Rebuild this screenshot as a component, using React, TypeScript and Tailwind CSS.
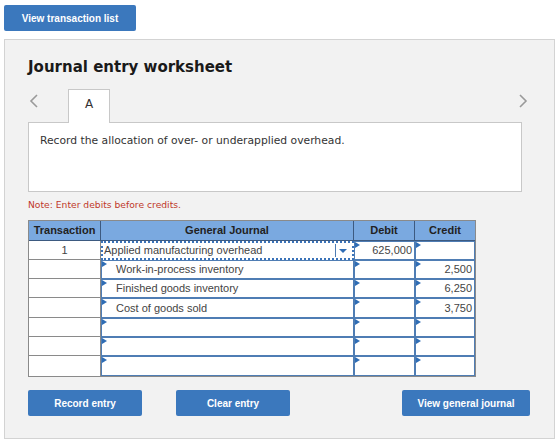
import React from 'react';

const rows = [
  { t: '1', acct: 'Applied manufacturing overhead', debit: '625,000', credit: '', focus: true },
  { t: '', acct: 'Work-in-process inventory', debit: '', credit: '2,500' },
  { t: '', acct: 'Finished goods inventory', debit: '', credit: '6,250' },
  { t: '', acct: 'Cost of goods sold', debit: '', credit: '3,750' },
  { t: '', acct: '', debit: '', credit: '' },
  { t: '', acct: '', debit: '', credit: '' },
  { t: '', acct: '', debit: '', credit: '' },
];

function Marker() {
  return (
    <span className="absolute left-0 top-0 w-0 h-0 border-t-[3px] border-b-[3px] border-l-[5px] border-t-transparent border-b-transparent border-l-[#2f6db5]" />
  );
}

function InputCell({ children, className }: { children?: React.ReactNode; className?: string }) {
  return (
    <div className={`relative bg-white border border-[#4f7db4] flex items-center ${className ?? ''}`}>
      <Marker />
      {children}
    </div>
  );
}

function BlueButton({ label, className }: { label: string; className: string }) {
  return (
    <button
      className={`block h-[26px] bg-[#3b78bd] rounded-[2px] text-white text-[10px] font-bold ${className}`}
      style={{ fontFamily: '"Liberation Sans", Arial, sans-serif' }}
    >
      {label}
    </button>
  );
}

export default function App() {
  return (
    <div className="w-[560px] h-[445px] bg-white pt-[5px] pl-[4px]" style={{ fontFamily: '"Liberation Sans", Arial, sans-serif' }}>
      <BlueButton label="View transaction list" className="w-[132px]" />

      <div className="mt-[8px] w-[551px] h-[400px] bg-[#f2f2f2] border border-[#d3d3d3] pl-[23px] pt-[17px]">
        <h1 className="text-[15px] font-bold text-[#1a1a1a] leading-[20px]" style={{ fontFamily: '"DejaVu Sans", Verdana, sans-serif' }}>
          Journal entry worksheet
        </h1>

        {/* tabs */}
        <div className="mt-[12px] w-[500px] h-[33px] flex items-end relative">
          <span className="absolute left-[1px] top-[4px]">
            <svg width="10" height="16" viewBox="0 0 10 16"><path d="M8 2 L2 8 L8 14" fill="none" stroke="#9a9a9a" strokeWidth="1.6" /></svg>
          </span>
          <div className="ml-[40px] w-[42px] h-[34px] bg-white border border-b-0 border-[#c8c8c8] flex justify-center pt-[5px] text-[12px] text-[#333] relative top-[1px] z-10" style={{ fontFamily: '"DejaVu Sans", Verdana, sans-serif' }}>
            A
          </div>
          <span className="absolute right-0 top-[4px]">
            <svg width="10" height="16" viewBox="0 0 10 16"><path d="M2 2 L8 8 L2 14" fill="none" stroke="#9a9a9a" strokeWidth="1.6" /></svg>
          </span>
        </div>

        <div className="w-[494px] h-[70px] bg-white border border-[#c8c8c8] px-[11px] pt-[10px] text-[10.75px] text-[#333]" style={{ fontFamily: '"DejaVu Sans", Verdana, sans-serif' }}>
          Record the allocation of over- or underapplied overhead.
        </div>

        <p className="mt-[6px] text-[9.2px] leading-[14px] text-[#c0392b]" style={{ fontFamily: '"DejaVu Sans", Verdana, sans-serif' }}>
          Note: Enter debits before credits.
        </p>

        {/* table */}
        <div className="mt-[8px] w-[448px] border border-[#8a8a8a] bg-white text-[11px] text-[#444]">
          <div className="flex h-[20px] bg-[#7aa9e0] font-bold text-[#222] border-b border-[#3d5a80]">
            <div className="w-[72px] flex items-center justify-center border-r border-[#3d5a80]">Transaction</div>
            <div className="w-[253px] flex items-center justify-center border-r border-[#3d5a80]">General Journal</div>
            <div className="w-[61px] flex items-center justify-center border-r border-[#3d5a80]">Debit</div>
            <div className="flex-1 flex items-center justify-center">Credit</div>
          </div>
          {rows.map((r, i) => (
            <div key={i} className={`flex ${i === 3 || i === 6 ? 'h-[20px]' : 'h-[19px]'}`}>
              <div className={`w-[72px] flex items-center justify-center border-r border-[#8a8a8a] ${i < 6 ? 'border-b' : ''}`}>
                {r.t}
              </div>
              {r.focus ? (
                <div className="relative w-[253px] bg-white border-2 border-dotted border-[#3b73b9] flex items-center pl-[1px]">
                  {r.acct}
                  <span className="absolute right-[16px] top-[1px] bottom-[1px] border-l border-[#4f7db4]" />
                  <span className="absolute right-[5px] top-[6px] w-0 h-0 border-l-[4px] border-r-[4px] border-t-[4px] border-l-transparent border-r-transparent border-t-[#2f6db5]" />
                </div>
              ) : (
                <InputCell className="w-[253px] pl-[14px]">{r.acct}</InputCell>
              )}
              <InputCell className="w-[61px] justify-end pr-[2px]">{r.debit}</InputCell>
              <InputCell className="flex-1 justify-end pr-[2px]">{r.credit}</InputCell>
            </div>
          ))}
        </div>

        <div className="mt-[13px] flex items-start w-[502px]">
          <BlueButton label="Record entry" className="w-[114px]" />
          <BlueButton label="Clear entry" className="w-[114px] ml-[34px]" />
          <BlueButton label="View general journal" className="w-[128px] ml-auto" />
        </div>
      </div>
    </div>
  );
}
